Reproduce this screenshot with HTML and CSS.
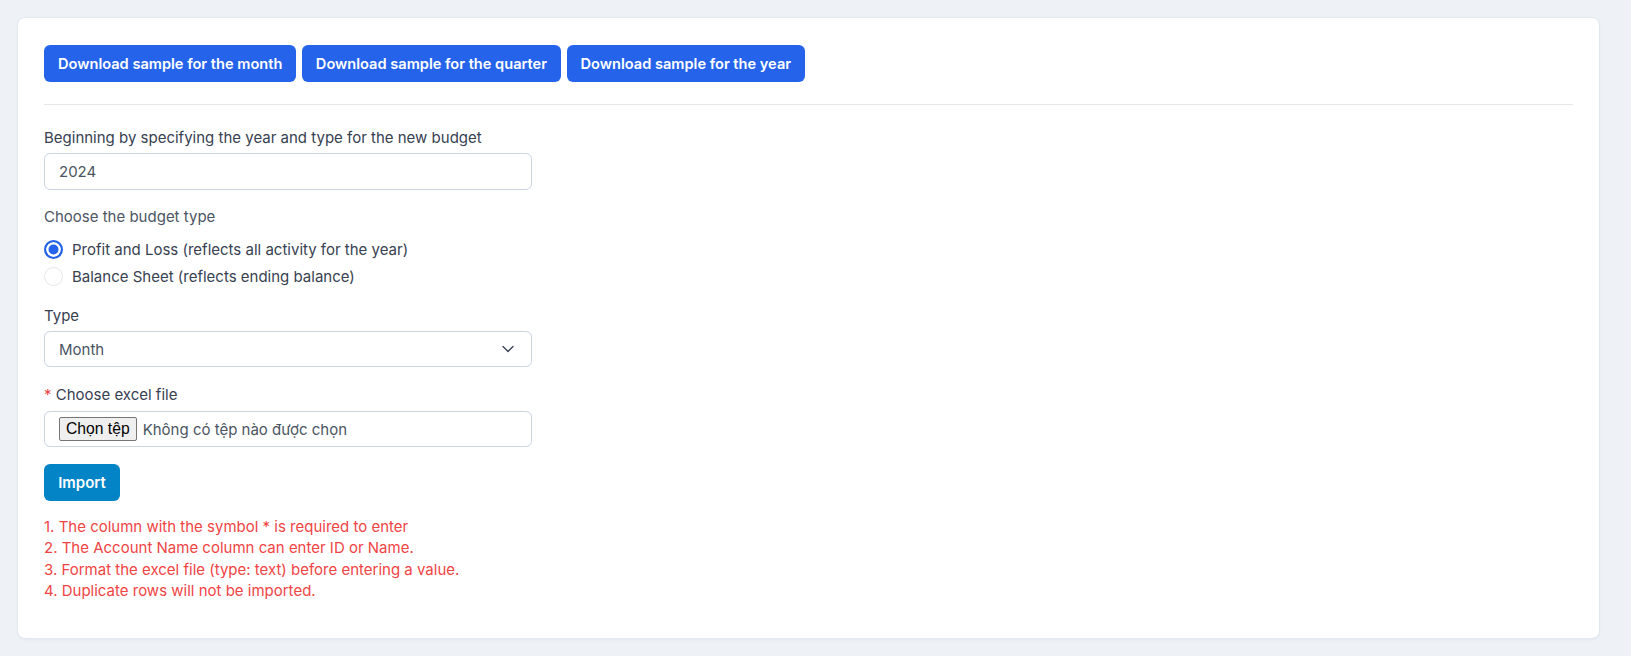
FILE: index.html
```html
<!DOCTYPE html>
<html lang="en">
<head>
    <meta charset="UTF-8">
    <meta name="viewport" content="width=device-width, initial-scale=1.0">
    <title>Import budget</title>
    <link rel="stylesheet" href="styles.css">
</head>
<body>
    <div class="card">
        <div class="sample-row">
            <button class="btn btn-blue">Download sample for the month</button>
            <button class="btn btn-blue">Download sample for the quarter</button>
            <button class="btn btn-blue">Download sample for the year</button>
        </div>

        <div class="divider"></div>

        <form class="import-form" onsubmit="return false">
            <label class="field-label first" for="year">Beginning by specifying the year and type for the new budget</label>
            <input class="text-input" type="text" id="year" value="2024">

            <div class="sub-label">Choose the budget type</div>
            <div class="radio-list">
                <label class="radio-row">
                    <input type="radio" name="budgetType" checked>
                    <span>Profit and Loss (reflects all activity for the year)</span>
                </label>
                <label class="radio-row">
                    <input type="radio" name="budgetType">
                    <span>Balance Sheet (reflects ending balance)</span>
                </label>
            </div>

            <label class="field-label after-radios" for="periodType">Type</label>
            <div class="select-wrap">
                <select id="periodType" class="select-input">
                    <option>Month</option>
                    <option>Quarter</option>
                    <option>Year</option>
                </select>
                <svg class="chevron" width="12" height="8" viewBox="0 0 12 8" fill="none">
                    <path d="M1 1.5L6 6.5L11 1.5" stroke="#374151" stroke-width="1.3" stroke-linecap="round" stroke-linejoin="round"/>
                </svg>
            </div>

            <div class="field-label"><span class="required">*</span> Choose excel file</div>
            <label class="file-box">
                <input type="file" class="file-hidden" accept=".xlsx,.xls">
                <span class="file-btn">Chọn tệp</span>
                <span class="file-name">Không có tệp nào được chọn</span>
            </label>

            <button class="btn btn-import">Import</button>

            <div class="notes">
                <div>1. The column with the symbol * is required to enter</div>
                <div>2. The Account Name column can enter ID or Name.</div>
                <div>3. Format the excel file (type: text) before entering a value.</div>
                <div>4. Duplicate rows will not be imported.</div>
            </div>
        </form>
    </div>
</body>
</html>
```

FILE: styles.css
```css
html, body {
    margin: 0;
}
body {
    background-color: #eef2f7;
    font-family: Inter, "Noto Sans", sans-serif;
    font-size: 15px;
    color: #374151;
    padding: 17px 31px 17px 17px;
}
.card {
    background-color: #fff;
    border: 1px solid #e2e8f0;
    border-radius: 8px;
    box-shadow: 0 1px 2px rgba(15, 23, 42, 0.04);
    padding: 27px 26px 37px 26px;
}
.sample-row {
    display: flex;
    gap: 5.5px;
}
.btn {
    font-family: Inter, "Noto Sans", sans-serif;
    font-size: 14.6px;
    font-weight: 600;
    color: #fff;
    border: none;
    border-radius: 6px;
    height: 37px;
    padding: 0 14px;
    cursor: pointer;
}
.btn-blue {
    background-color: #2563eb;
}
.btn-blue:hover {
    background-color: #1d4ed8;
}
.divider {
    height: 1px;
    background-color: #e5e7eb;
    margin-top: 22px;
}
.field-label {
    display: block;
    line-height: 20px;
    margin-top: 18px;
    margin-bottom: 5px;
    color: #374151;
}
.field-label.first {
    margin-top: 23px;
}
.field-label.after-radios {
    margin-top: 20px;
}
.required {
    color: #ef4444;
}
.text-input,
.select-input {
    display: block;
    box-sizing: border-box;
    width: 488px;
    height: 37px;
    border: 1px solid #cbd5e1;
    border-radius: 6px;
    padding: 0 14px;
    font-family: Inter, "Noto Sans", sans-serif;
    font-size: 15px;
    color: #4b5563;
    background-color: #fff;
    outline: none;
}
.sub-label {
    line-height: 20px;
    margin-top: 17px;
    color: #4b5563;
}
.radio-list {
    display: flex;
    flex-direction: column;
    gap: 7px;
    margin-top: 12px;
}
.radio-row {
    display: flex;
    align-items: center;
    gap: 9px;
    height: 20px;
    color: #374151;
    cursor: pointer;
}
.radio-row input {
    appearance: none;
    -webkit-appearance: none;
    margin: 0;
    width: 19px;
    height: 19px;
    border-radius: 50%;
    border: 1px solid #e5e7eb;
    background-color: #fff;
    cursor: pointer;
}
.radio-row input:checked {
    border: 2px solid #2563eb;
    background-color: #2563eb;
    box-shadow: inset 0 0 0 2.5px #fff;
}
.select-wrap {
    position: relative;
    width: 488px;
}
.select-input {
    appearance: none;
    -webkit-appearance: none;
    height: 36px;
}
.chevron {
    position: absolute;
    right: 18px;
    top: 14px;
    pointer-events: none;
}
.file-box {
    display: flex;
    align-items: center;
    box-sizing: border-box;
    width: 488px;
    height: 36px;
    border: 1px solid #cbd5e1;
    border-radius: 6px;
    padding: 0 14px;
    cursor: pointer;
}
.field-label + .file-box {
    margin-top: 6px;
}
.file-hidden {
    display: none;
}
.file-btn {
    box-sizing: border-box;
    height: 24px;
    line-height: 22px;
    padding: 0 6px;
    background-color: #efefef;
    border: 1px solid #767676;
    border-radius: 2px;
    font-family: "Liberation Sans", Arial, sans-serif;
    font-size: 15.7px;
    color: #000;
}
.file-name {
    margin-left: 6px;
    color: #4b5563;
}
.btn-import {
    display: block;
    margin-top: 17px;
    width: 76px;
    font-size: 15px;
    background-color: #0284c7;
}
.btn-import:hover {
    background-color: #0369a1;
}
.notes {
    margin-top: 15px;
    color: #ef4444;
    line-height: 21.33px;
}
```
